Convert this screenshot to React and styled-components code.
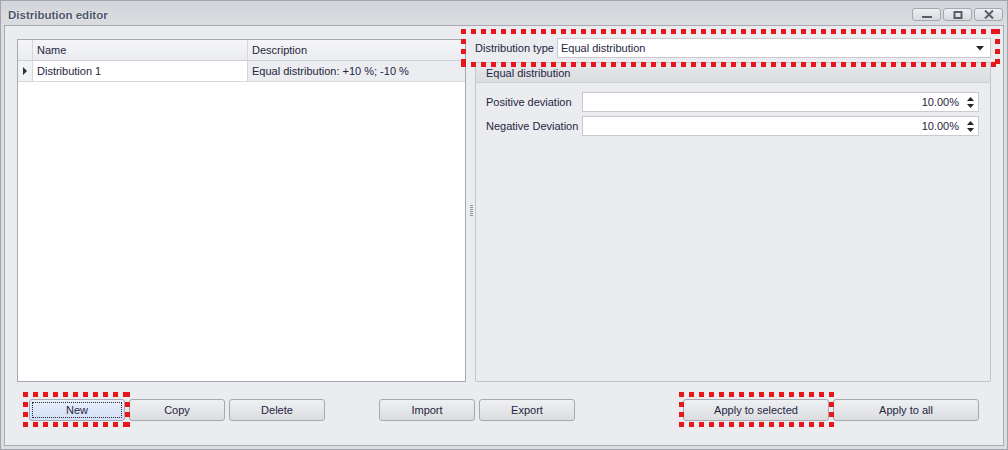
import React from "react";
import styled, { createGlobalStyle } from "styled-components";

const GlobalStyle = createGlobalStyle`
html, body {
  margin: 0;
  padding: 0;
  background: #ebecf0;
}
body {
  font-family: "Liberation Sans", Arial, sans-serif;
  font-size: 11px;
  color: #1f2540;
}
`;

const rows = [
    { name: "Distribution 1", description: "Equal distribution: +10 %; -10 %" },
];

const SpinArrowIcons = () => (
    <SpinArrows>
        <svg width="7" height="4" viewBox="0 0 7 4"><path d="M0 4 L3.5 0 L7 4 Z" fill="#23262f" /></svg>
        <svg width="7" height="4" viewBox="0 0 7 4"><path d="M0 0 H7 L3.5 4 Z" fill="#23262f" /></svg>
    </SpinArrows>
);

const App = () => {
    return (
        <Window>
            <GlobalStyle />
            <TitleBar>
                <Title>Distribution editor</Title>
                <Controls>
                    <CtrlButton aria-label="minimize">
                        <svg width="12" height="8" viewBox="0 0 12 8"><rect x="1" y="5" width="10" height="2" fill="#595d68" /></svg>
                    </CtrlButton>
                    <CtrlButton aria-label="maximize">
                        <svg width="12" height="8" viewBox="0 0 12 8"><rect x="2.5" y="1" width="7" height="6" fill="none" stroke="#595d68" strokeWidth="2" /></svg>
                    </CtrlButton>
                    <CtrlButton aria-label="close">
                        <svg width="12" height="9" viewBox="0 0 12 9"><path d="M2 0.5 L10 8.5 M10 0.5 L2 8.5" stroke="#595d68" strokeWidth="2" /></svg>
                    </CtrlButton>
                </Controls>
            </TitleBar>
            <Client>
                <MainRow>
                    <Grid>
                        <GridHeader>
                            <IndicatorCell header />
                            <HeadCell>Name</HeadCell>
                            <HeadCell last>Description</HeadCell>
                        </GridHeader>
                        {rows.map((r) => (
                            <GridRow key={r.name}>
                                <IndicatorCell>
                                    <svg width="5" height="8" viewBox="0 0 5 8"><path d="M0 0 L4 4 L0 8 Z" fill="#2b2f3a" /></svg>
                                </IndicatorCell>
                                <Cell>{r.name}</Cell>
                                <Cell last focused>{r.description}</Cell>
                            </GridRow>
                        ))}
                    </Grid>
                    <Splitter>
                        <Grip>
                            {[0, 1, 2, 3, 4, 5].map((i) => <GripDot key={i} />)}
                        </Grip>
                    </Splitter>
                    <RightPanel>
                        <TypeRow>
                            <TypeLabel>Distribution type</TypeLabel>
                            <Combo>
                                <span>Equal distribution</span>
                                <svg width="8" height="5" viewBox="0 0 8 5"><path d="M0 0 H8 L4 4.5 Z" fill="#23262f" /></svg>
                            </Combo>
                            <Highlight style={{ left: -14, top: -9, right: -9, bottom: -9 }} />
                        </TypeRow>
                        <GroupBox>
                            <GroupHeader>Equal distribution</GroupHeader>
                            <GroupBody>
                                <FieldRow>
                                    <FieldLabel>Positive deviation</FieldLabel>
                                    <Spin>
                                        <SpinValue>10.00%</SpinValue>
                                        <SpinArrowIcons />
                                    </Spin>
                                </FieldRow>
                                <FieldRow>
                                    <FieldLabel>Negative Deviation</FieldLabel>
                                    <Spin>
                                        <SpinValue>10.00%</SpinValue>
                                        <SpinArrowIcons />
                                    </Spin>
                                </FieldRow>
                            </GroupBody>
                        </GroupBox>
                    </RightPanel>
                </MainRow>
                <ButtonBar>
                    <ButtonGroup>
                        <Marked>
                            <Button primary>
                                <FocusRect>New</FocusRect>
                            </Button>
                            <Highlight style={{ left: -6, top: -7, right: -5, bottom: -6 }} />
                        </Marked>
                        <Button>Copy</Button>
                        <Button>Delete</Button>
                    </ButtonGroup>
                    <ButtonGroup offset="54px">
                        <Button>Import</Button>
                        <Button>Export</Button>
                    </ButtonGroup>
                    <ButtonGroup offset="auto">
                        <Marked>
                            <Button wide>Apply to selected</Button>
                            <Highlight style={{ left: -4, top: -7, right: -5, bottom: -6 }} />
                        </Marked>
                        <Button wide>Apply to all</Button>
                    </ButtonGroup>
                </ButtonBar>
            </Client>
        </Window>
    );
};

const Window = styled.div`
width: 1008px;
height: 450px;
box-sizing: border-box;
border: 1px solid #a3a4ab;
background: linear-gradient(#d4d5da, #dddee2 30px);
display: flex;
flex-direction: column;
overflow: hidden;
`;

const TitleBar = styled.div`
height: 24px;
display: flex;
align-items: center;
justify-content: space-between;
padding: 0 4px 0 7px;
`;

const Title = styled.div`
font-family: "Liberation Sans", Arial, sans-serif;
font-weight: 700;
font-size: 11.5px;
color: #4b5669;
text-shadow: 0 0 2px #ffffff;
margin-top: 3px;
`;

const Controls = styled.div`
display: flex;
gap: 2px;
margin-top: 3px;
`;

const CtrlButton = styled.button`
width: 29px;
height: 13px;
padding: 0;
display: flex;
align-items: center;
justify-content: center;
border: 1px solid #a5a7ae;
border-radius: 3px;
background: linear-gradient(#eeeff2, #d9dade);
`;

const Client = styled.div`
flex: 1;
margin: 0 3px 3px 3px;
border: 1px solid #aaabb2;
background: #ebecf0;
display: flex;
flex-direction: column;
padding: 13px 12px 0 12px;
`;

const MainRow = styled.div`
display: flex;
height: 343px;
`;

const Grid = styled.div`
width: 449px;
box-sizing: border-box;
border: 1px solid #a6a8ae;
background: #ffffff;
`;

const GridHeader = styled.div`
display: grid;
grid-template-columns: 15px 215px 1fr;
height: 20px;
background: linear-gradient(#f5f5f7, #ebecef);
border-bottom: 1px solid #cfd0d5;
`;

const GridRow = styled.div`
display: grid;
grid-template-columns: 15px 215px 1fr;
height: 20px;
border-bottom: 1px solid #d6d7db;
`;

const IndicatorCell = styled.div`
border-right: 1px solid #d6d7db;
background: ${(p) => (p.header ? "transparent" : "#f1f2f4")};
display: flex;
align-items: center;
justify-content: center;
`;

const HeadCell = styled.div`
display: flex;
align-items: center;
padding-left: 4px;
border-right: ${(p) => (p.last ? "none" : "1px solid #d6d7db")};
`;

const Cell = styled.div`
display: flex;
align-items: center;
padding-left: 4px;
background: ${(p) => (p.focused ? "#ecedf1" : "#ffffff")};
border-right: ${(p) => (p.last ? "none" : "1px solid #d6d7db")};
`;

const Splitter = styled.div`
width: 9px;
display: flex;
align-items: center;
justify-content: center;
`;

const Grip = styled.div`
display: flex;
flex-direction: column;
gap: 1px;
margin-left: 1px;
`;

const GripDot = styled.div`
width: 3px;
height: 1px;
background: #8e929c;
`;

const RightPanel = styled.div`
flex: 1;
display: flex;
flex-direction: column;
gap: 4px;
`;

const TypeRow = styled.div`
position: relative;
display: flex;
align-items: center;
height: 20px;
margin-top: -1px;
`;

const TypeLabel = styled.div`
width: 82px;
`;

const Combo = styled.div`
flex: 1;
height: 20px;
box-sizing: border-box;
border: 1px solid #c9cace;
background: #ffffff;
display: flex;
align-items: center;
justify-content: space-between;
padding: 0 6px 0 3px;
`;

const Highlight = styled.div`
position: absolute;
pointer-events: none;
background:
  repeating-linear-gradient(90deg, #e8161a 0 5px, transparent 5px 10px) top left / 100% 5px no-repeat,
  repeating-linear-gradient(90deg, #e8161a 0 5px, transparent 5px 10px) bottom left / 100% 5px no-repeat,
  repeating-linear-gradient(180deg, #e8161a 0 5px, transparent 5px 10px) top left / 5px 100% no-repeat,
  repeating-linear-gradient(180deg, #e8161a 0 5px, transparent 5px 10px) top right / 5px 100% no-repeat;
`;

const GroupBox = styled.div`
flex: 1;
border: 1px solid #c4c5cb;
border-radius: 2px;
display: flex;
flex-direction: column;
`;

const GroupHeader = styled.div`
height: 19px;
display: flex;
align-items: center;
padding-left: 10px;
background: linear-gradient(#e6e7eb, #dcdde1);
border-bottom: 1px solid #cfd0d5;
`;

const GroupBody = styled.div`
display: flex;
flex-direction: column;
gap: 4px;
padding: 9px 11px 0 10px;
`;

const FieldRow = styled.div`
display: flex;
align-items: center;
height: 20px;
`;

const FieldLabel = styled.div`
width: 96px;
`;

const Spin = styled.div`
flex: 1;
height: 20px;
box-sizing: border-box;
border: 1px solid #c9cace;
background: #ffffff;
display: flex;
align-items: center;
justify-content: flex-end;
`;

const SpinValue = styled.span`
margin-right: 8px;
`;

const SpinArrows = styled.div`
display: flex;
flex-direction: column;
gap: 3px;
margin-right: 4px;
`;

const ButtonBar = styled.div`
display: flex;
align-items: center;
margin-top: 17px;
padding: 0 12px;
`;

const ButtonGroup = styled.div`
display: flex;
gap: 4px;
margin-left: ${(p) => p.offset || "0"};
`;

const Marked = styled.div`
position: relative;
display: flex;
`;

const Button = styled.button`
width: ${(p) => (p.wide ? "146px" : "96px")};
height: 22px;
padding: 2px;
font-family: "Liberation Sans", Arial, sans-serif;
font-size: 11px;
color: #1f2540;
border: 1px solid #a7a9b0;
border-radius: 3px;
background: ${(p) =>
        p.primary
            ? "linear-gradient(#e9effb, #d3dff7)"
            : "linear-gradient(#eff0f2, #dcdde1)"};
display: flex;
align-items: center;
justify-content: center;
`;

const FocusRect = styled.span`
flex: 1;
align-self: stretch;
display: flex;
align-items: center;
justify-content: center;
border: 1px dotted #2a2a2a;
`;

export default App;
